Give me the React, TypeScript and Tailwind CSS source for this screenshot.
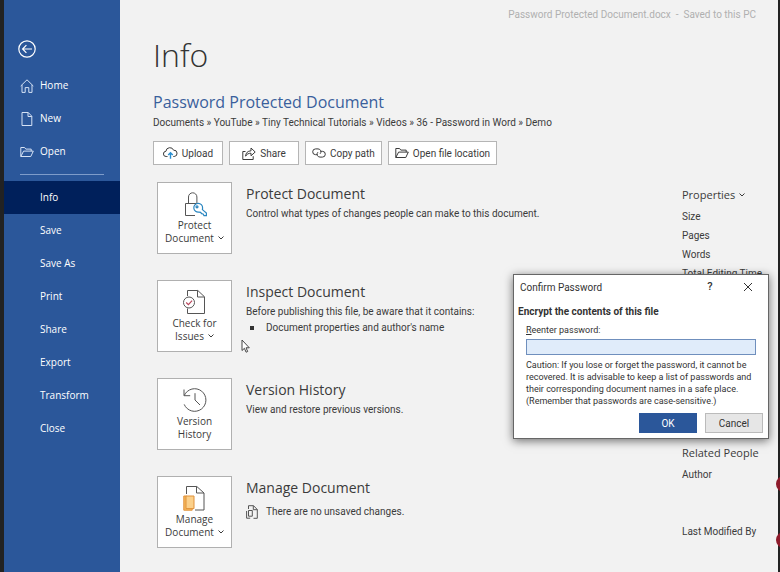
import type { ReactNode } from 'react';
import clsx from 'clsx';

interface NavItem {
  label: string;
  icon?: ReactNode;
  active?: boolean;
}

interface InfoSection {
  title: string;
  button: string[];
  hasMenu: boolean;
  icon: ReactNode;
  body: ReactNode;
}

function Chevron() {
  return (
    <svg viewBox="0 0 6 4" className="mb-0.5 ml-1 inline-block h-1 w-1.5 align-middle" fill="none" stroke="currentColor">
      <path d="M0.5 0.5 3 3 5.5 0.5" />
    </svg>
  );
}

function HomeIcon() {
  return (
    <svg viewBox="0 0 14 14" className="size-3.5" fill="none" stroke="currentColor">
      <path d="M0.7 7 7 0.8 13.3 7M2 6v7.4h3.2V8.6h3.6v4.8H12V6" />
    </svg>
  );
}

function NewIcon() {
  return (
    <svg viewBox="0 0 14 14" className="size-3.5" fill="none" stroke="currentColor">
      <path d="M2 0.5h6.2L11.8 4.2v9.3H2zM8 0.5v4h3.8" />
    </svg>
  );
}

function FolderIcon() {
  return (
    <svg viewBox="0 0 14 14" className="size-3.5" fill="none" stroke="currentColor">
      <path d="M0.8 11.5V2.5h3.8l1.2 1.6h5.4v2M0.8 11.5 3.6 6.1h9.7l-2.5 5.4z" />
    </svg>
  );
}

function UploadIcon() {
  return (
    <svg viewBox="0 0 15 12" className="h-3 w-[15px]" fill="none" stroke="currentColor">
      <path d="M4.5 9.5H3.2a2.6 2.6 0 0 1-.3-5.2A4 4 0 0 1 10.6 3.2a3.1 3.1 0 0 1 .6 6.3h-.9" />
      <path d="M7.5 11.8V5.8M5.2 8l2.3-2.3L9.8 8" stroke="#2b8fd0" strokeWidth="1.4" />
    </svg>
  );
}

function ShareIcon() {
  return (
    <svg viewBox="0 0 14 13" className="h-[13px] w-3.5" fill="none" stroke="currentColor">
      <path d="M3.5 4.5H0.8v8h10.4V9.2" />
      <path d="M3.6 9.2C3.8 5.8 5.6 4 9 3.8V1l4.2 4L9 8.8V6.2C6.6 6.2 4.8 7 3.6 9.2z" />
    </svg>
  );
}

function LinkIcon() {
  return (
    <svg viewBox="0 0 14 10" className="h-2.5 w-3.5" fill="none" stroke="currentColor">
      <path d="M5.2 6.7H3.6a2.9 2.9 0 0 1 0-5.8H6a2.9 2.9 0 0 1 2.1 4.9" />
      <path d="M8.8 3.3h1.6a2.9 2.9 0 0 1 0 5.8H8a2.9 2.9 0 0 1-2.1-4.9" />
    </svg>
  );
}

function LockIcon() {
  return (
    <svg viewBox="0 0 24 26" className="h-[26px] w-6" fill="none" stroke="#555">
      <path d="M12 24.5H2.5V12.5h14v2M5.5 12.5V6a4.2 4.2 0 0 1 8.4 0v6.5" />
      <g stroke="#2a86c0" strokeWidth="1.2">
        <path d="M19.6 17a4.4 4.4 0 1 0-3.6 4.1l1.6.2 1 1.4 1.5.3.9 1.6h2.4v-2.6l-4-3.4z" fill="#fff" />
        <circle cx="14" cy="15.8" r="1" />
      </g>
    </svg>
  );
}

function CheckDocIcon() {
  return (
    <svg viewBox="0 0 24 26" className="h-[26px] w-6" fill="none" stroke="#555">
      <path d="M4.5 7V1.5h10.3L21.5 7.8v16.7h-17v-5M14.5 1.5V8h7" />
      <circle cx="6" cy="13.5" r="5.5" fill="#fff" />
      <path d="m3.2 13.5 2.2 2.2 3.7-4" stroke="#b8475c" strokeWidth="1.2" />
    </svg>
  );
}

function HistoryIcon() {
  return (
    <svg viewBox="0 0 24 26" className="h-[26px] w-6" fill="none" stroke="#555">
      <path d="M1 2.5v6.2h6.2M1.3 8.4A11.3 11.3 0 1 1 1.2 17.4M12 6.2V13l5 5" />
    </svg>
  );
}

function ManageDocIcon() {
  return (
    <svg viewBox="0 0 24 26" className="h-[26px] w-6" fill="none" stroke="#555">
      <path d="M3.5 9V1.5h10.3L21 8v17h-9M13.5 1.5V8H21" />
      <path d="M3.5 11H0.8v14.2h8.4V23" stroke="#e0913a" fill="#f6b95c" />
      <path d="M3 11h8v12.6H3z" stroke="#e0913a" fill="#fbd08a" />
    </svg>
  );
}

function UnsavedIcon() {
  return (
    <svg viewBox="0 0 12 14" className="h-3.5 w-3" fill="none" stroke="#555">
      <path d="M2.5 4V0.7h5L11.3 4.5v8.8H7.5M7.3 0.7v4h4M0.6 6v7.2h3.6M2.5 5.5h3.8v5.7H2.5z" />
    </svg>
  );
}

const navItems: NavItem[] = [
  { label: 'Home', icon: <HomeIcon /> },
  { label: 'New', icon: <NewIcon /> },
  { label: 'Open', icon: <FolderIcon /> },
];

const fileItems: NavItem[] = [
  { label: 'Info', active: true },
  { label: 'Save' },
  { label: 'Save As' },
  { label: 'Print' },
  { label: 'Share' },
  { label: 'Export' },
  { label: 'Transform' },
  { label: 'Close' },
];

const actions = [
  { label: 'Upload', icon: <UploadIcon /> },
  { label: 'Share', icon: <ShareIcon /> },
  { label: 'Copy path', icon: <LinkIcon /> },
  { label: 'Open file location', icon: <FolderIcon /> },
];

const sections: InfoSection[] = [
  {
    title: 'Protect Document',
    button: ['Protect', 'Document'],
    hasMenu: true,
    icon: <LockIcon />,
    body: <p>Control what types of changes people can make to this document.</p>,
  },
  {
    title: 'Inspect Document',
    button: ['Check for', 'Issues'],
    hasMenu: true,
    icon: <CheckDocIcon />,
    body: (
      <>
        <p>Before publishing this file, be aware that it contains:</p>
        <ul>
          <li className="flex items-center gap-3 pl-1">
            <span className="size-1 bg-[#333]" />
            Document properties and author's name
          </li>
        </ul>
      </>
    ),
  },
  {
    title: 'Version History',
    button: ['Version', 'History'],
    hasMenu: false,
    icon: <HistoryIcon />,
    body: <p>View and restore previous versions.</p>,
  },
  {
    title: 'Manage Document',
    button: ['Manage', 'Document'],
    hasMenu: true,
    icon: <ManageDocIcon />,
    body: (
      <p className="flex items-center gap-2 pt-1">
        <UnsavedIcon />
        There are no unsaved changes.
      </p>
    ),
  },
];

function NavLink({ label, icon, active }: NavItem) {
  return (
    <a
      href="#"
      className={clsx('flex h-[33px] items-center gap-1.5 pl-4 text-[10px] font-medium text-white', active && 'bg-[#00205b]')}
    >
      <span className="w-3.5 text-[#d5e2f5]">{icon}</span>
      {label}
    </a>
  );
}

function Sidebar() {
  return (
    <nav className="w-[120px] shrink-0 border-l-4 border-[#222] bg-[#2b579a] pt-10 font-['Open_Sans','Noto_Sans',sans-serif]">
      <button type="button" aria-label="Back" className="ml-3.5 block text-white">
        <svg viewBox="0 0 18 18" className="size-[18px]" fill="none" stroke="currentColor" strokeWidth="1.2">
          <circle cx="9" cy="9" r="8.2" />
          <path d="M14 9H4.6M8.4 5.2 4.6 9l3.8 3.8" />
        </svg>
      </button>
      <div className="pt-[11px]">
        {navItems.map((item) => (
          <NavLink key={item.label} {...item} />
        ))}
      </div>
      <hr className="mx-4 my-1.5 border-[#7e9cca]" />
      {fileItems.map((item) => (
        <NavLink key={item.label} {...item} />
      ))}
    </nav>
  );
}

function Properties() {
  return (
    <aside className="w-24 shrink-0 pt-1 whitespace-nowrap">
      <h2 className="font-['Open_Sans','Noto_Sans',sans-serif] text-[11px] leading-[18px] font-medium">
        Properties
        <Chevron />
      </h2>
      <ul className="pt-[3px] text-[10px] leading-[19px]">
        <li>Size</li>
        <li>Pages</li>
        <li>Words</li>
        <li>Total Editing Time</li>
      </ul>
      <h2 className="pt-[161px] font-['Open_Sans','Noto_Sans',sans-serif] text-[11px] leading-[18px] font-medium">
        Related People
      </h2>
      <ul className="text-[10px] leading-[19px]">
        <li className="pt-[3px]">Author</li>
        <li className="pt-[38px]">Last Modified By</li>
      </ul>
    </aside>
  );
}

function ConfirmPasswordDialog() {
  return (
    <form
      role="dialog"
      aria-labelledby="dialog-title"
      className="absolute top-[274px] right-[11px] w-[256px] border border-[#666] bg-white px-1 pb-[5px] text-[9px] text-[#333] shadow-[0_2px_9px_rgba(0,0,0,0.55)]"
    >
      <div className="flex h-6 items-center">
        <h2 id="dialog-title" className="grow pl-0.5 text-[10px]">
          Confirm Password
        </h2>
        <button type="button" aria-label="Help" className="w-6 text-[11px] font-medium">
          ?
        </button>
        <button type="button" aria-label="Close" className="mr-0.5 ml-3 flex w-7 justify-center">
          <svg viewBox="0 0 10 10" className="size-2.5" fill="none" stroke="currentColor">
            <path d="m1 1 8 8M9 1 1 9" />
          </svg>
        </button>
      </div>
      <h3 className="pt-1 text-[10px] leading-[18px] font-bold">Encrypt the contents of this file</h3>
      <div className="px-2">
        <label htmlFor="password" className="block leading-[18px]">
          <span className="underline">R</span>eenter password:
        </label>
        <input
          id="password"
          type="password"
          className="block h-4 w-full border border-[#6f8fbd] bg-[#e0ecfa] px-1 outline-none"
        />
        <p className="pt-1 leading-[12px]">
          Caution: If you lose or forget the password, it cannot be recovered. It is advisable to keep a list of
          passwords and their corresponding document names in a safe place. (Remember that passwords are
          case-sensitive.)
        </p>
      </div>
      <div className="flex justify-end gap-2 pt-1.5 pr-px text-[10px]">
        <button type="submit" className="h-5 w-[58px] bg-[#2b579a] text-white">
          OK
        </button>
        <button type="button" className="h-5 w-[58px] border border-[#bbb] bg-[#e6e6e6]">
          Cancel
        </button>
      </div>
    </form>
  );
}

export default function App() {
  return (
    <div className="relative flex min-h-screen overflow-hidden bg-[#f2f2f2] font-[Roboto,'Open_Sans',sans-serif] text-[#3b3b3b]">
      <Sidebar />
      <main className="min-w-0 grow border-r-2 border-[#222] pl-[33px]">
        <p className="pt-[7px] pr-[22px] text-right text-[10px] leading-4 text-[#b0b0b0]">
          Password Protected Document.docx&nbsp; -&nbsp; Saved to this PC
        </p>
        <h1 className="pt-[11px] font-['Open_Sans','Noto_Sans',sans-serif] text-[32px] leading-[42px] font-light text-[#333]">
          Info
        </h1>
        <h2 className="pt-3.5 font-['Open_Sans','Noto_Sans',sans-serif] text-[16px] leading-6 text-[#3a5f9c]">
          Password Protected Document
        </h2>
        <p className="text-[10px] leading-[18px]">
          Documents » YouTube » Tiny Technical Tutorials » Videos » 36 - Password in Word » Demo
        </p>
        <div className="flex gap-1.5 pt-[9px]">
          {actions.map((action) => (
            <button
              key={action.label}
              type="button"
              className="flex h-6 min-w-[70px] items-center justify-center gap-1 border border-[#b5b5b5] bg-white px-1.5 text-[10px]"
            >
              {action.icon}
              {action.label}
            </button>
          ))}
        </div>
        <div className="flex pt-[17px] pl-1">
          <div className="flex grow flex-col gap-[26px]">
            {sections.map((section) => (
              <section key={section.title} className="flex gap-3.5">
                <button
                  type="button"
                  className="flex h-[72px] w-[75px] shrink-0 flex-col items-center border border-[#b0b0b0] bg-white pt-2 font-['Open_Sans','Noto_Sans',sans-serif] text-[10px] leading-[13px] font-medium"
                >
                  {section.icon}
                  <span className="pt-0.5">
                    {section.button[0]}
                    <br />
                    {section.button[1]}
                    {section.hasMenu && <Chevron />}
                  </span>
                </button>
                <div className="text-[10px] leading-4">
                  <h3 className="py-0.5 font-['Open_Sans','Noto_Sans',sans-serif] text-[14px] leading-5">
                    {section.title}
                  </h3>
                  {section.body}
                </div>
              </section>
            ))}
          </div>
          <Properties />
        </div>
      </main>
      <ConfirmPasswordDialog />

      {/* Markers cut off by the window edge */}
      <span className="absolute top-[476px] -right-3 size-4 rounded-full bg-[#8e1b2b]" />
      <span className="absolute top-[532px] -right-3 size-4 rounded-full bg-[#8e1b2b]" />

      {/* Mouse pointer */}
      <svg viewBox="0 0 9 14" className="absolute top-[339px] left-[241px] h-3.5 w-[9px]" fill="#fff" stroke="#444">
        <path d="M1 1v10.5l2.4-2.2 1.7 3.9 1.6-.7L5 8.8h3.3z" />
      </svg>
    </div>
  );
}
